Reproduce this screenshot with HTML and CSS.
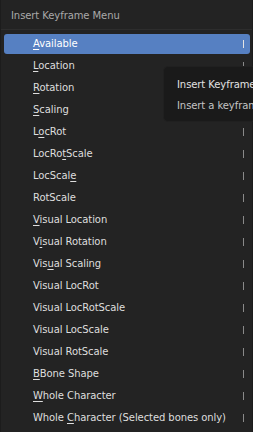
FILE: index.html
```html
<!DOCTYPE html>
<html>
<head>
<meta charset="utf-8">
<link rel="stylesheet" href="styles.css">
</head>
<body>
<div class="menu">
  <div class="title">Insert Keyframe Menu</div>
  <ul class="items">
    <li class="item active"><span class="label"><u>A</u>vailable</span><span class="key"></span></li>
    <li class="item"><span class="label"><u>L</u>ocation</span><span class="key"></span></li>
    <li class="item"><span class="label"><u>R</u>otation</span><span class="key"></span></li>
    <li class="item"><span class="label"><u>S</u>caling</span><span class="key"></span></li>
    <li class="item"><span class="label">L<u>o</u>cRot</span><span class="key"></span></li>
    <li class="item"><span class="label">LocRo<u>t</u>Scale</span><span class="key"></span></li>
    <li class="item"><span class="label">LocScal<u>e</u></span><span class="key"></span></li>
    <li class="item"><span class="label">RotScale</span><span class="key"></span></li>
    <li class="item"><span class="label"><u>V</u>isual Location</span><span class="key"></span></li>
    <li class="item"><span class="label">V<u>i</u>sual Rotation</span><span class="key"></span></li>
    <li class="item"><span class="label">Vis<u>u</u>al Scaling</span><span class="key"></span></li>
    <li class="item"><span class="label">Visual LocRot</span><span class="key"></span></li>
    <li class="item"><span class="label">Visual LocRotScale</span><span class="key"></span></li>
    <li class="item"><span class="label">Visual LocScale</span><span class="key"></span></li>
    <li class="item"><span class="label">Visual RotScale</span><span class="key"></span></li>
    <li class="item"><span class="label"><u>B</u>Bone Shape</span><span class="key"></span></li>
    <li class="item"><span class="label"><u>W</u>hole Character</span><span class="key"></span></li>
    <li class="item"><span class="label">Whole <u>C</u>haracter (Selected bones only)</span><span class="key"></span></li>
  </ul>
</div>
<div class="tooltip">
  <div class="tip-title">Insert Keyframe Menu</div>
  <div class="tip-desc">Insert a keyframe on the active selection</div>
</div>
</body>
</html>
```
FILE: styles.css
```css
html, body {
  margin: 0;
  padding: 0;
  width: 253px;
  height: 432px;
  overflow: hidden;
  background: #232323;
  font-family: "DejaVu Sans", "Liberation Sans", sans-serif;
  font-size: 10px;
  letter-spacing: -0.08px;
  position: relative;
}

.menu {
  width: 253px;
  height: 432px;
  box-sizing: border-box;
  background: #232323;
  border-left: 1px solid #1c1c1c;
  border-right: 1px solid #1c1c1c;
}

.title {
  height: 30px;
  line-height: 31px;
  padding-left: 10px;
  color: #a9a9a9;
  border-bottom: 1px solid #2d2d2d;
  box-sizing: border-box;
}

.items {
  list-style: none;
  margin: 0;
  padding: 4px 2px 0 3px;
  display: flex;
  flex-direction: column;
  gap: 2px;
}

.item {
  height: 20px;
  line-height: 22px;
  display: flex;
  align-items: center;
  padding-left: 29px;
  padding-right: 6px;
  border-radius: 3px;
  color: #dedede;
}

.item.active {
  background: #5680c2;
  color: #ffffff;
}

.label {
  flex: 1;
  white-space: nowrap;
}

.label u {
  text-decoration: underline;
  text-decoration-thickness: 1px;
  text-underline-offset: 2px;
}

.key {
  width: 1px;
  height: 8px;
  background: #8a8a8a;
}

.item.active .key {
  background: #e4e4e4;
}

.tooltip {
  position: absolute;
  left: 163px;
  top: 66px;
  width: 160px;
  height: 56px;
  box-sizing: border-box;
  background: #1a1a1a;
  border: 1px solid #202020;
  border-radius: 5px;
  padding: 8px 0 0 13px;
  white-space: nowrap;
}

.tip-title {
  color: #e2e2e2;
  line-height: 20px;
}

.tip-desc {
  color: #c4c4c4;
  line-height: 20px;
  margin-top: 1px;
}
```
